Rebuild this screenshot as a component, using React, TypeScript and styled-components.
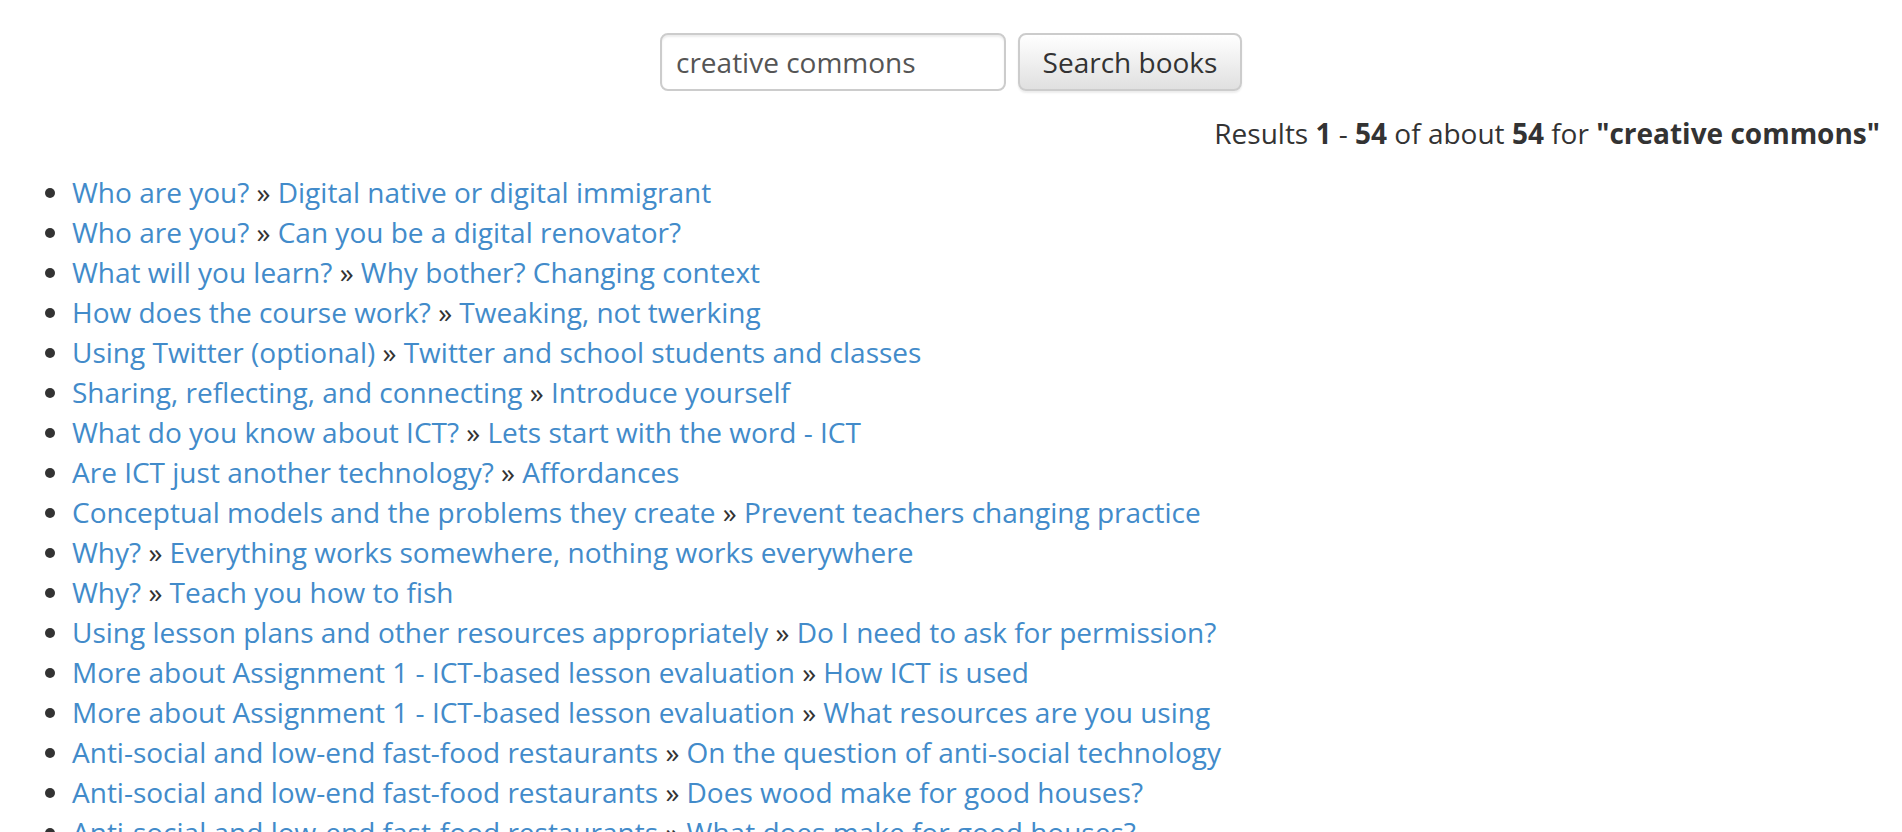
import React from "react";
import styled, {createGlobalStyle} from "styled-components";

const GlobalStyles = createGlobalStyle`
  html, body {
    margin: 0;
    padding: 0;
    background: #fff;
  }
  body {
    font-family: "Open Sans", "Liberation Sans", sans-serif;
    font-size: 28px;
    line-height: 40px;
    color: #333;
  }
`;

type Result = { chapter: string; page: string };

const results: Result[] = [
    {chapter: "Who are you?", page: "Digital native or digital immigrant"},
    {chapter: "Who are you?", page: "Can you be a digital renovator?"},
    {chapter: "What will you learn?", page: "Why bother? Changing context"},
    {chapter: "How does the course work?", page: "Tweaking, not twerking"},
    {chapter: "Using Twitter (optional)", page: "Twitter and school students and classes"},
    {chapter: "Sharing, reflecting, and connecting", page: "Introduce yourself"},
    {chapter: "What do you know about ICT?", page: "Lets start with the word - ICT"},
    {chapter: "Are ICT just another technology?", page: "Affordances"},
    {chapter: "Conceptual models and the problems they create", page: "Prevent teachers changing practice"},
    {chapter: "Why?", page: "Everything works somewhere, nothing works everywhere"},
    {chapter: "Why?", page: "Teach you how to fish"},
    {chapter: "Using lesson plans and other resources appropriately", page: "Do I need to ask for permission?"},
    {chapter: "More about Assignment 1 - ICT-based lesson evaluation", page: "How ICT is used"},
    {chapter: "More about Assignment 1 - ICT-based lesson evaluation", page: "What resources are you using"},
    {chapter: "Anti-social and low-end fast-food restaurants", page: "On the question of anti-social technology"},
    {chapter: "Anti-social and low-end fast-food restaurants", page: "Does wood make for good houses?"},
    {chapter: "Anti-social and low-end fast-food restaurants", page: "What does make for good houses?"},
];

function App() {
    return (
        <Page>
            <GlobalStyles/>
            <SearchForm onSubmit={e => e.preventDefault()}>
                <SearchInput type="text" defaultValue="creative commons"/>
                <SearchButton type="submit">Search books</SearchButton>
            </SearchForm>
            <Summary>
                Results <b>1</b> - <b>54</b> of about <b>54</b> for <b>"creative commons"</b>
            </Summary>
            <ResultList>
                {results.map((r, i) => (
                    <ResultItem key={i}>
                        <Link href="#">{r.chapter}</Link> » <Link href="#">{r.page}</Link>
                    </ResultItem>
                ))}
            </ResultList>
        </Page>
    );
}

export default App;

const Page = styled.div`
  padding-top: 33px;
`;

const SearchForm = styled.form`
  display: flex;
  justify-content: center;
  gap: 12px;
  margin: 0;
`;

const SearchInput = styled.input`
  box-sizing: border-box;
  width: 346px;
  height: 58px;
  padding: 0 14px;
  border: 2px solid #ccc;
  border-radius: 8px;
  font-family: "Open Sans", "Liberation Sans", sans-serif;
  font-size: 28px;
  color: #555;
  outline: none;
  box-shadow: inset 0 2px 2px rgba(0, 0, 0, 0.075);
`;

const SearchButton = styled.button`
  box-sizing: border-box;
  width: 224px;
  height: 58px;
  padding: 0 22px;
  border: 2px solid #ccc;
  border-radius: 8px;
  background: linear-gradient(to bottom, #fff 0, #e0e0e0 100%);
  box-shadow: inset 0 2px 0 rgba(255, 255, 255, 0.15), 0 2px 2px rgba(0, 0, 0, 0.075);
  font-family: "Open Sans", "Liberation Sans", sans-serif;
  font-size: 28px;
  color: #333;
  cursor: pointer;
`;

const Summary = styled.p`
  margin: 22px 0 0;
  padding-right: 22px;
  text-align: right;

  b {
    font-weight: 700;
  }
`;

const ResultList = styled.ul`
  margin: 19px 0 0;
  padding-left: 72px;
  list-style: disc;
`;

const ResultItem = styled.li``;

const Link = styled.a`
  color: #428bca;
  text-decoration: none;
`;
